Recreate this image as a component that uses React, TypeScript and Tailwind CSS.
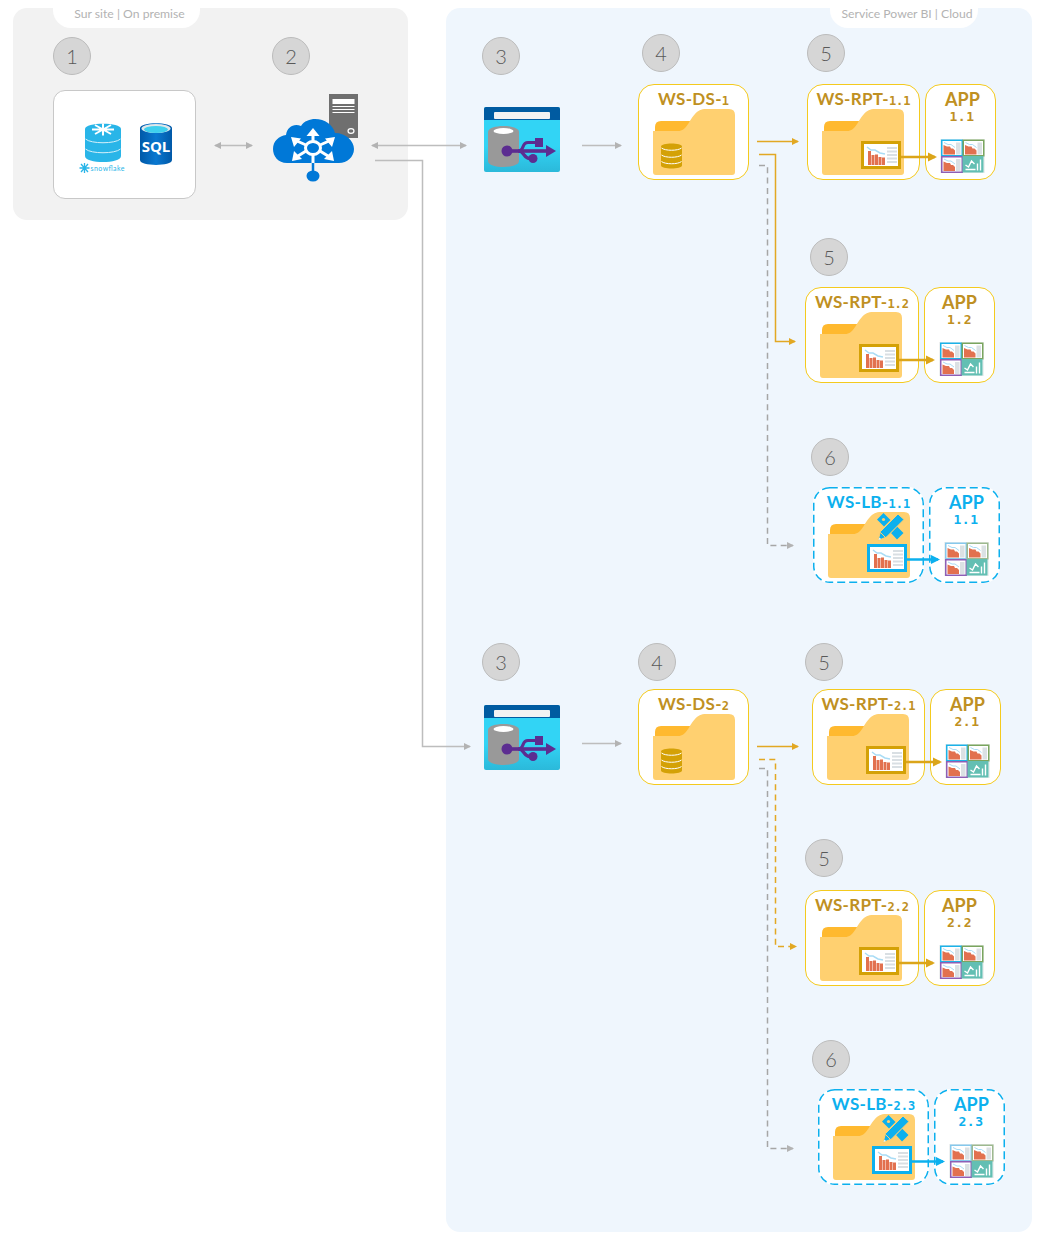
const GOLD = "#e2a823";
const BLUE = "#0cb0ee";

function Folder({ children }: { children?: React.ReactNode }) {
  return (
    <div className="relative w-[83px] h-[66px]">
      <svg width="83" height="66" viewBox="0 0 83 66" className="block">
        <path d="M2 18 Q2 12 8 12 L44 12 L44 26 L2 26 Z" fill="#ffb92f" />
        <path
          d="M0 22 L25 22 C34 22 36 11 42 5 C45 1.500 48 0 53 0 L76 0 Q82 0 82 6 L82 63 Q82 66 79 66 L3 66 Q0 66 0 63 Z"
          fill="#ffd070"
        />
      </svg>
      {children}
    </div>
  );
}

function DbIcon() {
  return (
    <svg width="21" height="26" viewBox="0 0 21 26" className="absolute left-2 top-[34px]">
      <path d="M0 3.500 C0 -0.500 21 -0.500 21 3.500 L21 22.500 C21 26.500 0 26.500 0 22.500 Z" fill="#d4a106" />
      <path d="M0.500 5 C4 8 17 8 20.500 5 M0.500 12 C4 15 17 15 20.500 12 M0.500 18.500 C4 21.500 17 21.500 20.500 18.500" stroke="#fff" strokeWidth="1" fill="none" />
    </svg>
  );
}

function ReportIcon({ color }: { color: string }) {
  return (
    <svg width="40" height="28" viewBox="0 0 40 28" className="absolute left-[39px] top-[32px]">
      <rect x="1.500" y="1.500" width="37" height="25" fill="#fff" stroke={color} strokeWidth="3" />
      <path d="M6 6 L10 9 L14 9 L19 12 L24 13" stroke="#a9dcf5" strokeWidth="1.500" fill="none" />
      <path d="M7 10h3v14h-3z M10.500 14h3v10h-3z M14 13.500h3v10.500h-3z M17.500 16h3v8h-3z M21 16.500h3v7.500h-3z" fill="#e2714f" />
      <path d="M26 7h10 M26 10.500h10 M26 14h10 M26 17.500h10 M26 21h10" stroke="#d9dfe3" strokeWidth="1.800" />
    </svg>
  );
}

function Tile({ x, y, color }: { x: number; y: number; color: string }) {
  return (
    <g transform={`translate(${x} ${y})`}>
      <rect x="0.750" y="0.750" width="20.500" height="15.500" fill="#fff" stroke={color} strokeWidth="1.500" />
      <path d="M3 3 L7 5 L10 5 L14 8" stroke="#a9dcf5" strokeWidth="1" fill="none" />
      <path d="M2.500 5.500 L6 7 L9 7 L10 9 L12 9 L14 11 L14 15 L2.500 15 Z" fill="#e2714f" />
      <rect x="15" y="3" width="4.500" height="12" fill="#dbe1e4" />
    </g>
  );
}

function AppIcon({ pale }: { pale?: boolean }) {
  return (
    <svg width="45" height="34" viewBox="0 0 45 34" className="block">
      <rect width="45" height="34" fill="#eef0f0" />
      <Tile x={1} y={0.500} color={pale ? "#86c8ec" : "#1cb2e8"} />
      <Tile x={22.500} y={0.500} color={pale ? "#9eb98f" : "#7aa55f"} />
      <Tile x={1} y={17} color="#8e5fb5" />
      <g transform="translate(22.500 17)">
        <rect width="21" height="16.500" fill="#63bfb3" />
        <path d="M3 9 L6 11 L9 5 L12 8 M3 13.500 h10 M15 14.500 v-7 M18 14.500 v-11" stroke="#fff" strokeWidth="1.400" fill="none" />
      </g>
    </svg>
  );
}

function ToolsIcon() {
  return (
    <svg width="27" height="28" viewBox="0 0 27 28" className="absolute left-[49px] top-[1px]">
      <path d="M0 6.500 L6.500 0 L13.500 7 L7 13.500 Z M14 20 L20 13.500 L26.500 20 L20 26.500 Z" fill={BLUE} />
      <circle cx="6.500" cy="6.500" r="1.600" fill="#ffd070" />
      <path d="M21 1 L27 6.500 L9.500 24 L1 27.500 L3.500 18.500 Z" fill={BLUE} stroke="#ffd070" strokeWidth="1" />
      <path d="M3.500 19.500 L8.500 24.500" stroke="#ffd070" strokeWidth="1" />
      <path d="M2.500 24.500 L1.500 27 L4 26 Z" fill="#fff" />
    </svg>
  );
}

function SnowflakeDb() {
  return (
    <svg width="48" height="52" viewBox="0 0 48 52" className="block">
      <path d="M6 6 C6 -1 42 -1 42 6 L42 33 C42 41 6 41 6 33 Z" fill="#29b5e8" />
      <path d="M6.500 16 C12 21 36 21 41.500 16 M6.500 26 C12 31 36 31 41.500 26" stroke="#d5f0fa" strokeWidth="1" fill="none" />
      <path d="M13 6.500 H35 M16 2 L32 11 M32 2 L16 11 M24 0.500 V12.500" stroke="#fff" strokeWidth="2" />
      <path d="M0.500 45 H10.500 M2 41 L9 49 M9 41 L2 49 M5.500 40 V50" stroke="#29b5e8" strokeWidth="1.300" />
      <text x="11.500" y="47.500" fontSize="7" fontFamily="Lato, sans-serif" fill="#29b5e8" textLength="34">snowflake</text>
    </svg>
  );
}

function SqlIcon() {
  return (
    <svg width="32" height="42" viewBox="0 0 32 42" className="block">
      <defs>
        <linearGradient id="sqlBody" x1="0" x2="1" y1="0" y2="0">
          <stop offset="0" stopColor="#0059a8" />
          <stop offset="0.500" stopColor="#0a78d0" />
          <stop offset="1" stopColor="#0059a8" />
        </linearGradient>
      </defs>
      <path d="M0 5 C0 -1.500 32 -1.500 32 5 L32 37 C32 43.500 0 43.500 0 37 Z" fill="url(#sqlBody)" />
      <ellipse cx="16" cy="5.500" rx="14.500" ry="4.500" fill="#dfe7ea" />
      <ellipse cx="16" cy="6.500" rx="12" ry="3.500" fill="#3fd0ee" />
      <text x="16" y="29" textAnchor="middle" fontSize="15" fontWeight="700" fontFamily="'Open Sans', sans-serif" fill="#fff">SQL</text>
    </svg>
  );
}

function CloudIcon() {
  return (
    <svg width="82" height="63" viewBox="0 0 82 63" className="block">
      <path
        d="M14 44 C5 44 0 37 0 30 C0 22 6 17 13 16 C14 8 21 4 28 7 C31 2 37 0 42 0 C52 0 60 6 62 14 C73 14 81 22 81 30 C81 38 74 44 66 44 Z"
        fill="#0078d7"
      />
      <path d="M40 44 V54" stroke="#0078d7" strokeWidth="2.500" />
      <ellipse cx="40" cy="57" rx="6.500" ry="5.500" fill="#0078d7" />
      <g stroke="#fff" strokeWidth="3" fill="none">
        <ellipse cx="40" cy="29" rx="7.500" ry="6.500" />
        <path d="M40 22 V15 M33 26 L24 22 M47 26 L56 22 M33 32 L25 37 M47 32 L55 37 M40 36 V44" />
      </g>
      <path d="M40 9 L46.500 17 L33.500 17 Z M18 18 L28 19.500 L21 28 Z M62 18 L52 19.500 L59 28 Z M19 42 L29 40 L21 32 Z M61 42 L51 40 L59 32 Z" fill="#fff" />
    </svg>
  );
}

function ServerIcon() {
  return (
    <svg width="29" height="44" viewBox="0 0 29 44" className="block">
      <rect width="29" height="44" fill="#6f6f6f" />
      <rect x="3.500" y="5" width="22" height="5" fill="#fff" />
      <path d="M3.500 12.500h22 M3.500 15.500h22 M3.500 18.500h22" stroke="#fff" strokeWidth="1.200" />
      <ellipse cx="22" cy="37" rx="3" ry="2.300" fill="none" stroke="#fff" strokeWidth="1.200" />
    </svg>
  );
}

function UsbIcon() {
  return (
    <svg width="76" height="65" viewBox="0 0 76 65" className="block">
      <defs>
        <linearGradient id="usbBody" x1="0" x2="0" y1="0" y2="1">
          <stop offset="0.600" stopColor="#32d4f5" />
          <stop offset="1" stopColor="#2bb9da" />
        </linearGradient>
      </defs>
      <path d="M2 0 H74 Q76 0 76 2 V63 Q76 65 74 65 H2 Q0 65 0 63 V2 Q0 0 2 0 Z" fill="url(#usbBody)" />
      <path d="M2 0 H74 Q76 0 76 2 V13 H0 V2 Q0 0 2 0 Z" fill="#005ba1" />
      <rect x="10" y="5" width="56" height="7" rx="1" fill="#f2f2f2" />
      <path d="M4 25 C4 17 35 17 35 25 L35 54 C35 62 4 62 4 54 Z" fill="#999" />
      <ellipse cx="19.500" cy="24" rx="10" ry="3" fill="#fff" />
      <g fill="#5c2d91">
        <circle cx="23" cy="44" r="5.500" />
        <rect x="25" y="42.200" width="40" height="3.600" />
        <path d="M62 38 L72 44 L62 50 Z" />
        <rect x="51" y="31" width="8" height="9" />
        <circle cx="49" cy="51.500" r="4.500" />
      </g>
      <path d="M34 44 C41 44 37 35.500 44 35.500 H52 M34 44 C41 44 39 51.500 46 51.500" stroke="#5c2d91" strokeWidth="3.200" fill="none" />
    </svg>
  );
}

function Badge({ n, x, y }: { n: number; x: number; y: number }) {
  return (
    <div
      className="absolute w-[38px] h-[38px] rounded-full bg-[#d6d6d6] border-[1.5px] border-[#bcbcbc] flex items-center justify-center text-[20px] font-light text-[#595959]"
      style={{ left: x, top: y }}
    >
      {n}
    </div>
  );
}

type CardProps = {
  x: number;
  y: number;
  w: number;
  title: string;
  num: string;
  kind: "ds" | "rpt" | "lb" | "app";
  dashed?: boolean;
  nudge?: boolean;
};

function Card({ x, y, w, title, num, kind, dashed, nudge }: CardProps) {
  return (
    <div
      className={
        dashed
          ? "absolute h-[96px] rounded-[16px] bg-white pt-[5px] flex flex-col items-center text-[#0cb0ee]"
          : "absolute h-[96px] rounded-[16px] bg-white border-[1.5px] border-[#f4ca1e] pt-[3.5px] flex flex-col items-center text-[#bf9022]"
      }
      style={{ left: x, top: y, width: w }}
    >
      {dashed && (
        <svg className="absolute left-0 top-0" width={w} height="96">
          <rect
            x="0.750"
            y="0.750"
            width={w - 1.5}
            height="94.500"
            rx="16"
            fill="none"
            stroke={BLUE}
            strokeWidth="1.500"
            strokeDasharray="8 4"
          />
        </svg>
      )}
      {kind === "app" ? (
        <>
          <div className={nudge ? "relative h-[20px] ml-[4px] text-[18px] leading-[20px] font-bold" : "relative h-[20px] text-[18px] leading-[20px] font-bold"}>
            {title}
          </div>
          <div
            className={
              nudge
                ? "relative h-[16px] ml-[3px] text-[13px] leading-[16px] font-bold tracking-[0.5px] font-['DejaVu_Sans_Mono',monospace]"
                : "relative h-[16px] text-[13px] leading-[16px] font-bold tracking-[0.5px] font-['DejaVu_Sans_Mono',monospace]"
            }
          >
            {num}
          </div>
          <div className="relative mt-[14px] ml-[4px]">
            <AppIcon pale={dashed} />
          </div>
        </>
      ) : (
        <>
          <div className="relative h-[20px] text-[17px] leading-[20px] font-bold tracking-[0.3px] whitespace-nowrap">
            {title}
            <span className="text-[12px] tracking-normal font-['DejaVu_Sans_Mono',monospace]">{num}</span>
          </div>
          <div className={dashed ? "absolute left-[15px] top-[25px]" : "absolute left-[13.5px] top-[23.5px]"}>
            <Folder>
              {kind === "ds" && <DbIcon />}
              {kind === "rpt" && <ReportIcon color="#d4a106" />}
              {kind === "lb" && (
                <>
                  <ToolsIcon />
                  <ReportIcon color={BLUE} />
                </>
              )}
            </Folder>
          </div>
        </>
      )}
    </div>
  );
}

const badges = [
  { n: 1, x: 53, y: 37 },
  { n: 2, x: 272, y: 37 },
  { n: 3, x: 482, y: 37 },
  { n: 4, x: 642, y: 34 },
  { n: 5, x: 807, y: 34 },
  { n: 5, x: 810, y: 238 },
  { n: 6, x: 811, y: 438 },
  { n: 3, x: 482, y: 643 },
  { n: 4, x: 638, y: 643 },
  { n: 5, x: 805, y: 643 },
  { n: 5, x: 805, y: 839 },
  { n: 6, x: 812, y: 1040 },
];

const cards: CardProps[] = [
  { x: 638, y: 84, w: 111, title: "WS-DS-", num: "1", kind: "ds" },
  { x: 638, y: 689, w: 111, title: "WS-DS-", num: "2", kind: "ds" },
  { x: 807, y: 84, w: 113, title: "WS-RPT-", num: "1.1", kind: "rpt" },
  { x: 925, y: 84, w: 71, title: "APP", num: "1.1", kind: "app", nudge: true },
  { x: 805, y: 287, w: 114, title: "WS-RPT-", num: "1.2", kind: "rpt" },
  { x: 924, y: 287, w: 71, title: "APP", num: "1.2", kind: "app" },
  { x: 813, y: 487, w: 111, title: "WS-LB-", num: "1.1", kind: "lb", dashed: true },
  { x: 929, y: 487, w: 71, title: "APP", num: "1.1", kind: "app", dashed: true, nudge: true },
  { x: 812, y: 689, w: 113, title: "WS-RPT-", num: "2.1", kind: "rpt" },
  { x: 930, y: 689, w: 71, title: "APP", num: "2.1", kind: "app", nudge: true },
  { x: 805, y: 890, w: 114, title: "WS-RPT-", num: "2.2", kind: "rpt" },
  { x: 924, y: 890, w: 71, title: "APP", num: "2.2", kind: "app" },
  { x: 818, y: 1089, w: 111, title: "WS-LB-", num: "2.3", kind: "lb", dashed: true },
  { x: 934, y: 1089, w: 71, title: "APP", num: "2.3", kind: "app", dashed: true, nudge: true },
];

function Connectors() {
  return (
    <svg className="absolute left-0 top-0 pointer-events-none" width="1049" height="1246" fill="none">
      <defs>
        <marker id="headGray" markerUnits="userSpaceOnUse" markerWidth="8" markerHeight="8" refX="6" refY="4" orient="auto-start-reverse">
          <path d="M0 0.500 L7 4 L0 7.500 Z" fill="#b3b3b3" />
        </marker>
        <marker id="headGold" markerUnits="userSpaceOnUse" markerWidth="8" markerHeight="8" refX="6" refY="4" orient="auto">
          <path d="M0 0.500 L7 4 L0 7.500 Z" fill={GOLD} />
        </marker>
        <marker id="headGoldBig" markerUnits="userSpaceOnUse" markerWidth="10" markerHeight="10" refX="7" refY="5" orient="auto">
          <path d="M0 0.500 L9 5 L0 9.500 Z" fill="#dba51a" />
        </marker>
        <marker id="headBlueBig" markerUnits="userSpaceOnUse" markerWidth="10" markerHeight="10" refX="7" refY="5" orient="auto">
          <path d="M0 0.500 L9 5 L0 9.500 Z" fill={BLUE} />
        </marker>
      </defs>
      <g stroke="#bdbdbd" strokeWidth="1.500">
        <path d="M215 145.500 H252" markerStart="url(#headGray)" markerEnd="url(#headGray)" />
        <path d="M372 145.500 H466" markerStart="url(#headGray)" markerEnd="url(#headGray)" />
        <path d="M375 160.500 H422.500 V746.500 H470" markerEnd="url(#headGray)" />
        <path d="M582 145.500 H621" markerEnd="url(#headGray)" />
        <path d="M582 743.500 H621" markerEnd="url(#headGray)" />
      </g>
      <g stroke="#a6a6a6" strokeWidth="1.500" strokeDasharray="6 4.300">
        <path d="M759 165.500 H767.500 V545.500 H793" markerEnd="url(#headGray)" />
        <path d="M759 768.500 H767.500 V1148.500 H793" markerEnd="url(#headGray)" />
      </g>
      <g stroke={GOLD} strokeWidth="1.500">
        <path d="M757 141.500 H798" markerEnd="url(#headGold)" />
        <path d="M759 154.500 H775.500 V341.500 H795" markerEnd="url(#headGold)" />
        <path d="M757 746.500 H798" markerEnd="url(#headGold)" />
        <path d="M759 759.500 H775.500 V946.500 H796" strokeDasharray="6 4.300" markerEnd="url(#headGold)" />
      </g>
      <g stroke="#dba51a" strokeWidth="2.500">
        <path d="M901 157 H935" markerEnd="url(#headGoldBig)" />
        <path d="M899 360 H933" markerEnd="url(#headGoldBig)" />
        <path d="M906 762 H940" markerEnd="url(#headGoldBig)" />
        <path d="M899 963 H933" markerEnd="url(#headGoldBig)" />
      </g>
      <g stroke={BLUE} strokeWidth="2.500">
        <path d="M905 559.500 H938" markerEnd="url(#headBlueBig)" />
        <path d="M910 1161.500 H943" markerEnd="url(#headBlueBig)" />
      </g>
    </svg>
  );
}

export default function App() {
  return (
    <div className="relative w-[1049px] h-[1246px] bg-white font-['Lato',sans-serif] overflow-hidden">
      {/* panels */}
      <div className="flex items-start pt-[8px] pl-[13px]">
        <div className="relative w-[395px] h-[212px] rounded-[14px] bg-[#f2f2f2]">
          <div className="absolute left-[40px] top-[-8px] w-[147px] h-[28px] pl-[6px] rounded-b-[18px] bg-white flex items-center justify-center text-[12.2px] text-[#b3b3b3]">
            Sur site | On premise
          </div>
        </div>
        <div className="relative ml-[38px] w-[586px] h-[1224px] rounded-[14px] bg-[#eff6fd]">
          <div className="absolute left-[384px] top-[-8px] w-[148px] h-[28px] pl-[6px] rounded-b-[18px] bg-white flex items-center justify-center text-[12.2px] text-[#b3b3b3]">
            Service Power BI | Cloud
          </div>
        </div>
      </div>

      {/* source box */}
      <div className="absolute left-[53px] top-[90px] w-[143px] h-[109px] rounded-[12px] bg-white border border-[#c8c8c8] flex items-start gap-[13px] pt-[32px] pl-[25px]">
        <SnowflakeDb />
        <SqlIcon />
      </div>

      {/* gateway */}
      <div className="absolute left-[329px] top-[94px]">
        <ServerIcon />
      </div>
      <div className="absolute left-[273px] top-[119px]">
        <CloudIcon />
      </div>

      {/* dataflows */}
      <div className="absolute left-[484px] top-[107px]">
        <UsbIcon />
      </div>
      <div className="absolute left-[484px] top-[705px]">
        <UsbIcon />
      </div>

      {cards.map((c, i) => (
        <Card key={i} {...c} />
      ))}
      {badges.map((b, i) => (
        <Badge key={i} {...b} />
      ))}
      <Connectors />
    </div>
  );
}
